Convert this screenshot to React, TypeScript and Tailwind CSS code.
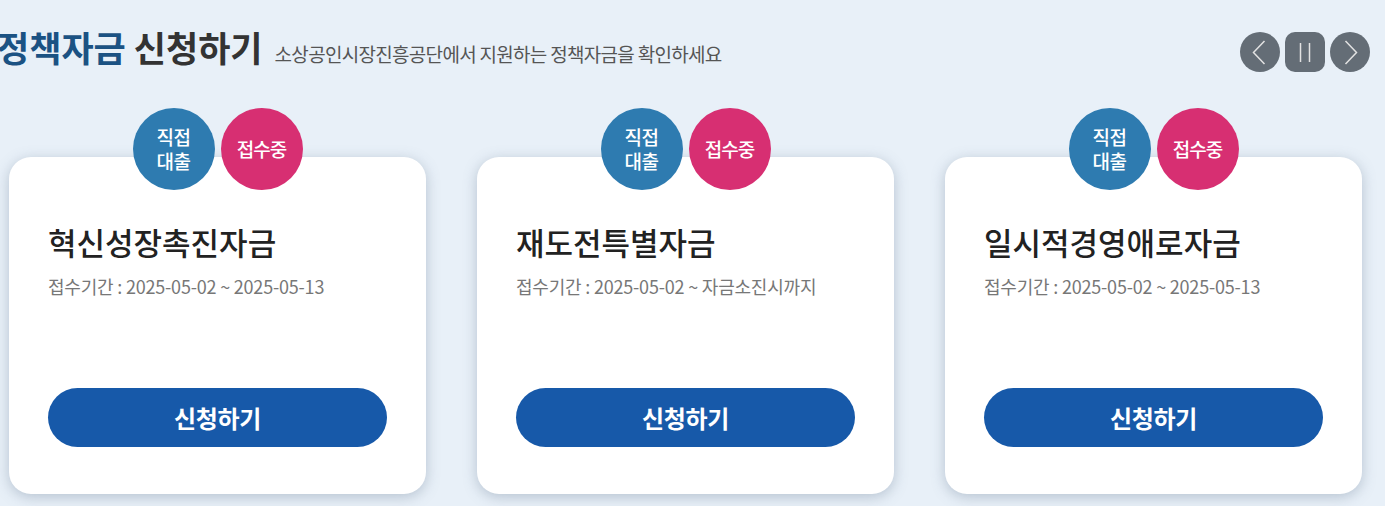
import React from "react";

const font = { fontFamily: '"Noto Sans CJK KR", "Noto Sans", sans-serif' };

type Item = { title: string; period: string };

const items: Item[] = [
  { title: "혁신성장촉진자금", period: "접수기간 : 2025-05-02 ~ 2025-05-13" },
  { title: "재도전특별자금", period: "접수기간 : 2025-05-02 ~ 자금소진시까지" },
  { title: "일시적경영애로자금", period: "접수기간 : 2025-05-02 ~ 2025-05-13" },
];

function Card({ item }: { item: Item }) {
  return (
    <div className="flex w-[417px] shrink-0 flex-col items-center">
      <div className="relative z-10 flex gap-[6px]">
        <div className="flex h-[82px] w-[82px] items-center justify-center rounded-full bg-[#2e7bb0] text-center text-[19px] font-medium leading-[24px] text-white tracking-[-0.5px]">
          <p>
            직접
            <br />
            대출
          </p>
        </div>
        <div className="flex h-[82px] w-[82px] items-center justify-center rounded-full bg-[#d72f72] text-[19px] font-medium text-white tracking-[-1px]">
          접수중
        </div>
      </div>
      <div className="relative mt-[-33px] flex h-[337px] w-full flex-col rounded-[22px] bg-white px-[39px] pt-[66px] pb-[47px] shadow-[0_3px_14px_rgba(90,110,135,0.35)]">
        <div className="text-[31px] font-medium leading-[38px] text-[#222] tracking-[0px]">
          {item.title}
        </div>
        <div className="mt-[13px] text-[18px] leading-[24px] text-[#777] tracking-[-0.2px]">
          {item.period}
        </div>
        <button className="mt-auto flex h-[59px] w-full items-center justify-center rounded-full bg-[#1759a9] text-[24px] font-bold text-white tracking-[-0.3px]">
          신청하기
        </button>
      </div>
    </div>
  );
}

export default function App() {
  return (
    <div className="h-[506px] w-full overflow-hidden bg-[#e8f0f8]" style={font}>
      <div className="flex items-start justify-between pt-[27px] pr-[15px]">
        <div className="ml-[-3px] flex items-baseline">
          <h1 className="text-[35px] font-bold leading-[40px] tracking-[0px]">
            <span className="text-[#1b5283]">정책자금</span>{" "}
            <span className="text-[#333]">신청하기</span>
          </h1>
          <span className="ml-[12px] text-[19px] text-[#555] tracking-[-0.7px]">
            소상공인시장진흥공단에서 지원하는 정책자금을 확인하세요
          </span>
        </div>
        <div className="mt-[5px] flex gap-[5px]">
          <button className="flex h-[40px] w-[40px] items-center justify-center rounded-full bg-[#646d76]">
            <svg width="40" height="40" viewBox="0 0 40 40" fill="none">
              <path d="M24.5 9 L13.5 20.5 L24.5 32" stroke="#e2e2e2" strokeWidth="1.5" />
            </svg>
          </button>
          <button className="flex h-[40px] w-[40px] items-center justify-center rounded-[10px] bg-[#646d76]">
            <svg width="40" height="40" viewBox="0 0 40 40" fill="none">
              <path d="M15.5 11 V30 M24.5 11 V30" stroke="#e2e2e2" strokeWidth="1.5" />
            </svg>
          </button>
          <button className="flex h-[40px] w-[40px] items-center justify-center rounded-full bg-[#646d76]">
            <svg width="40" height="40" viewBox="0 0 40 40" fill="none">
              <path d="M15.5 9 L26.5 20.5 L15.5 32" stroke="#e2e2e2" strokeWidth="1.5" />
            </svg>
          </button>
        </div>
      </div>
      <div className="mt-[36px] flex gap-[51px] pl-[9px]">
        {items.map((it) => (
          <Card key={it.title} item={it} />
        ))}
      </div>
    </div>
  );
}
